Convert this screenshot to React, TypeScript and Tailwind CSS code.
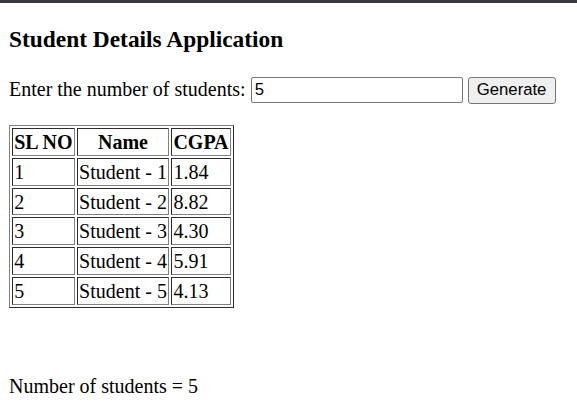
import React from "react";

const rows = [
  ["1", "Student - 1", "1.84"],
  ["2", "Student - 2", "8.82"],
  ["3", "Student - 3", "4.30"],
  ["4", "Student - 4", "5.91"],
  ["5", "Student - 5", "4.13"],
];

const cell =
  "border border-[gray] [border-style:inset] px-[1.25px] pt-[2px] pb-[0.8px] leading-[23px]";

export default function App() {
  return (
    <div className="min-h-[410px] bg-white text-black [font-family:'Liberation_Serif','Times_New_Roman',serif]">
      <div className="h-[3px] bg-[#383a44]" />
      <div className="px-[9px]">
        <h3 className="mt-[23.4px] mb-[23.7px] text-[23.4px] font-bold leading-[26.9px]">
          Student Details Application
        </h3>
        <div className="flex items-start text-[20px] leading-[23px]">
          <span className="mt-[1px] whitespace-pre">Enter the number of students: </span>
          <input
            defaultValue="5"
            className="h-[26px] w-[212px] rounded-[2px] border border-[#767676] px-[3px] text-[16.7px] leading-[20px] [font-family:'Liberation_Sans',Arial,sans-serif] outline-none"
          />
          <button className="ml-[5px] h-[27px] w-[88px] rounded-[3px] border border-[#767676] bg-[#efefef] text-[16.7px] leading-[20px] text-black [font-family:'Liberation_Sans',Arial,sans-serif]">
            Generate
          </button>
        </div>
        <table className="mt-[21px] border border-[gray] [border-style:outset] border-separate border-spacing-[2px] text-[20px]">
          <thead>
            <tr>
              <th className={cell + " font-bold text-center"}>SL NO</th>
              <th className={cell + " font-bold text-center"}>Name</th>
              <th className={cell + " font-bold text-center"}>CGPA</th>
            </tr>
          </thead>
          <tbody>
            {rows.map((r) => (
              <tr key={r[0]}>
                {r.map((c, i) => (
                  <td key={i} className={cell + " text-left"}>
                    {c}
                  </td>
                ))}
              </tr>
            ))}
          </tbody>
        </table>
        <p className="mt-[67px] text-[20px] leading-[23px]">Number of students = 5</p>
      </div>
    </div>
  );
}
